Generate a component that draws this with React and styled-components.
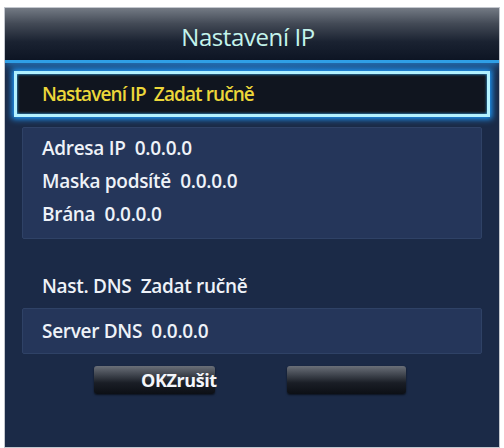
import React from "react";
import styled, { createGlobalStyle } from "styled-components";

const GlobalStyle = createGlobalStyle`
  html, body {
    margin: 0;
    padding: 0;
    background: #ffffff;
  }
  body {
    font-family: "Open Sans", "DejaVu Sans", sans-serif;
  }
`;

const Page = styled.div`
  width: 504px;
  height: 448px;
  padding: 7px 4px 2px 4px;
  box-sizing: border-box;
`;

const Panel = styled.div`
  height: 100%;
  border: 1px solid #c3c7ce;
  background: #1b2a47;
  display: flex;
  flex-direction: column;
  overflow: hidden;
`;

const TitleBar = styled.div`
  height: 52px;
  flex: none;
  display: flex;
  align-items: center;
  justify-content: center;
  background: linear-gradient(
    to bottom,
    #737a84 0%,
    #434a56 30%,
    #1a2231 65%,
    #0d1524 100%
  );
  border-bottom: 3px solid #2f9fe6;
  box-shadow: 0 2px 8px rgba(40, 150, 240, 0.7);
  position: relative;
  z-index: 1;
`;

const Title = styled.h1`
  margin: 0;
  padding: 4px 8px 0 0;
  font-size: 24px;
  font-weight: 400;
  letter-spacing: -0.4px;
  color: #c4f4ec;
`;

const Body = styled.div`
  flex: 1;
  display: flex;
  flex-direction: column;
  padding: 8px 9px 0;
  background: radial-gradient(
      ellipse 60% 30px at 50% 0,
      rgba(40, 130, 220, 0.35),
      transparent
    ),
    #1b2a47;
`;

const FocusRow = styled.div`
  height: 46px;
  box-sizing: border-box;
  border: 3px solid #b4f2ff;
  box-shadow: 0 0 6px 2px #1e9cff, inset 0 0 3px #3cb6ff;
  background: #10151f;
  display: flex;
  align-items: center;
  padding-left: 25px;
`;

const Group = styled.div`
  margin: 10px 8px 0;
  padding: ${(p) => p.$pad || "3px 0 8px"};
  background: ${(p) => (p.$plain ? "transparent" : "#25365a")};
  border: 1px solid ${(p) => (p.$plain ? "transparent" : "#2f4266")};
  border-radius: 2px;
`;

const Row = styled.div`
  height: ${(p) => p.$h || 33}px;
  display: flex;
  align-items: center;
  padding-left: 19px;
  font-size: 19px;
  font-weight: 600;
  letter-spacing: ${(p) => (p.$focus ? "-0.9px" : "-0.3px")};
  color: ${(p) => (p.$focus ? "#ecd73a" : "#eef2f8")};
  white-space: pre;
`;

const Buttons = styled.div`
  display: flex;
  justify-content: center;
  gap: 72px;
  margin-top: 12px;
  padding-right: 4px;
`;

const Button = styled.div`
  width: ${(p) => p.$w}px;
  height: 28px;
  box-sizing: border-box;
  border-radius: 3px;
  background: linear-gradient(
    to bottom,
    #6a6f78 0%,
    #3b4049 35%,
    #1a1e26 60%,
    #0c0f15 100%
  );
  box-shadow: 0 1px 2px rgba(0, 0, 0, 0.6);
  display: flex;
  align-items: center;
  padding-left: 47px;
  font-size: 18px;
  font-weight: 700;
  letter-spacing: -0.4px;
  color: #f4f6fa;
  white-space: nowrap;
  overflow: visible;
`;

export default function App() {
  return (
    <>
      <GlobalStyle />
      <Page>
        <Panel>
          <TitleBar>
            <Title>Nastavení IP</Title>
          </TitleBar>
          <Body>
            <FocusRow>
              <Row $focus $h={40} style={{ paddingLeft: 0 }}>
                {"Nastavení IP  Zadat ručně"}
              </Row>
            </FocusRow>
            <Group>
              <Row>{"Adresa IP  0.0.0.0"}</Row>
              <Row>{"Maska podsítě  0.0.0.0"}</Row>
              <Row>{"Brána  0.0.0.0"}</Row>
            </Group>
            <Group $plain $pad="0">
              <Row $h={57} style={{ alignItems: "flex-end", paddingBottom: 8, boxSizing: "border-box" }}>
                {"Nast. DNS  Zadat ručně"}
              </Row>
            </Group>
            <Group $pad="0" style={{ marginTop: 0 }}>
              <Row $h={44}>{"Server DNS  0.0.0.0"}</Row>
            </Group>
            <Buttons>
              <Button $w={121}>OKZrušit</Button>
              <Button $w={119} />
            </Buttons>
          </Body>
        </Panel>
      </Page>
    </>
  );
}
